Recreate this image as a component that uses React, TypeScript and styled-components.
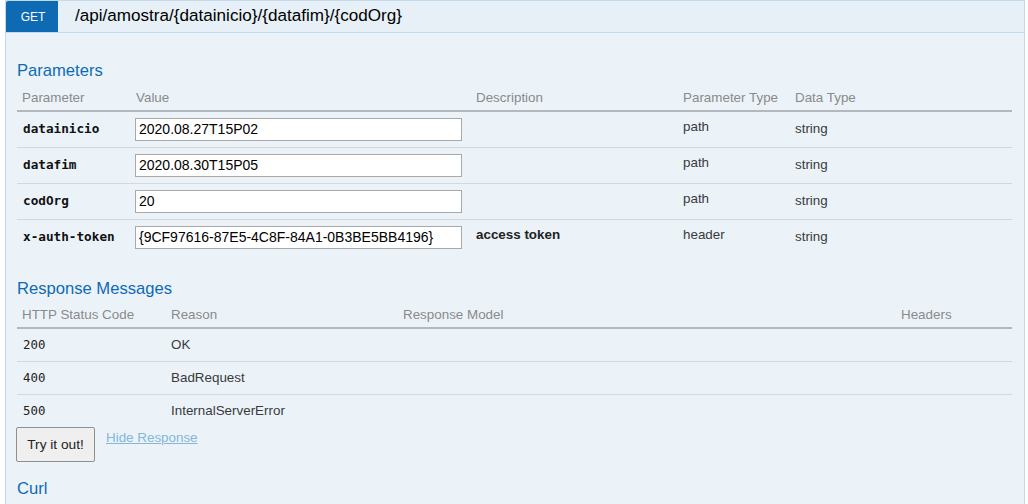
import React from "react";
import styled, { createGlobalStyle } from "styled-components";

const GlobalStyle = createGlobalStyle`
  html, body {
    margin: 0;
    padding: 0;
    background: #ffffff;
    font-family: "Liberation Sans", Arial, sans-serif;
  }
  * {
    box-sizing: border-box;
  }
`;

type Param = {
  name: string;
  value: string;
  description?: string;
  paramType: string;
  dataType: string;
};

const params: Param[] = [
  { name: "datainicio", value: "2020.08.27T15P02", paramType: "path", dataType: "string" },
  { name: "datafim", value: "2020.08.30T15P05", paramType: "path", dataType: "string" },
  { name: "codOrg", value: "20", paramType: "path", dataType: "string" },
  {
    name: "x-auth-token",
    value: "{9CF97616-87E5-4C8F-84A1-0B3BE5BB4196}",
    description: "access token",
    paramType: "header",
    dataType: "string",
  },
];

const responses = [
  { code: "200", reason: "OK" },
  { code: "400", reason: "BadRequest" },
  { code: "500", reason: "InternalServerError" },
];

export default function App() {
  return (
    <>
      <GlobalStyle />
      <Operation>
        <Heading>
          <Method>GET</Method>
          <Path>/api/amostra/{"{datainicio}"}/{"{datafim}"}/{"{codOrg}"}</Path>
        </Heading>
        <Content>
          <SectionTitle $top={28}>Parameters</SectionTitle>
          <Table>
            <colgroup>
              <col style={{ width: 114 }} />
              <col style={{ width: 340 }} />
              <col style={{ width: 207 }} />
              <col style={{ width: 112 }} />
              <col />
            </colgroup>
            <thead>
              <HeadRow $height={30}>
                <Th>Parameter</Th>
                <Th>Value</Th>
                <Th>Description</Th>
                <Th>Parameter Type</Th>
                <Th>Data Type</Th>
              </HeadRow>
            </thead>
            <tbody>
              {params.map((p) => (
                <Row key={p.name} $height={36}>
                  <Cell>
                    <Code $bold>{p.name}</Code>
                  </Cell>
                  <Cell>
                    <ValueInput type="text" defaultValue={p.value} />
                  </Cell>
                  <Cell $raised>
                    <Strong>{p.description}</Strong>
                  </Cell>
                  <Cell $raised>{p.paramType}</Cell>
                  <Cell>{p.dataType}</Cell>
                </Row>
              ))}
            </tbody>
          </Table>

          <SectionTitle $top={24}>Response Messages</SectionTitle>
          <Table>
            <colgroup>
              <col style={{ width: 149 }} />
              <col style={{ width: 232 }} />
              <col style={{ width: 498 }} />
              <col />
            </colgroup>
            <thead>
              <HeadRow $height={29}>
                <Th>HTTP Status Code</Th>
                <Th>Reason</Th>
                <Th>Response Model</Th>
                <Th>Headers</Th>
              </HeadRow>
            </thead>
            <tbody>
              {responses.map((r) => (
                <Row key={r.code} $height={33}>
                  <Cell>
                    <Code>{r.code}</Code>
                  </Cell>
                  <Cell>{r.reason}</Cell>
                  <Cell />
                  <Cell />
                </Row>
              ))}
            </tbody>
          </Table>

          <Actions>
            <TryButton type="button">Try it out!</TryButton>
            <HideLink href="#">Hide Response</HideLink>
          </Actions>

          <SectionTitle $top={17}>Curl</SectionTitle>
        </Content>
      </Operation>
    </>
  );
}

const Operation = styled.div`
  margin: 0 3px 0 5px;
  border: 1px solid #c3d9ec;
  border-bottom: none;
  background: #ebf3f9;
  min-height: 504px;
`;

const Heading = styled.div`
  display: flex;
  align-items: center;
  height: 32px;
  background: #e7f0f7;
  border-bottom: 1px solid #c3d9ec;
`;

const Method = styled.span`
  display: flex;
  align-items: center;
  justify-content: center;
  width: 52px;
  height: 31px;
  background: #0f6ab4;
  color: #ffffff;
  font-size: 12px;
  border-top-left-radius: 2px;
  padding-left: 2px;
`;

const Path = styled.span`
  margin-left: 17px;
  font-size: 17.1px;
  color: #000000;
  padding-bottom: 2px;
`;

const Content = styled.div`
  padding: 0 12px 0 11px;
`;

const SectionTitle = styled.h4<{ $top: number }>`
  margin: ${(p) => p.$top}px 0 0;
  height: 20px;
  line-height: 20px;
  font-size: 16.6px;
  font-weight: normal;
  color: #0f6ab4;
`;

const Table = styled.table`
  width: 100%;
  border-collapse: collapse;
  table-layout: fixed;
  font-size: 13.4px;
  color: #3a3a3a;
`;

const HeadRow = styled.tr<{ $height: number }>`
  height: ${(p) => p.$height}px;
  border-bottom: 2px solid #b4b8bc;
`;

const Th = styled.th`
  text-align: left;
  font-weight: normal;
  color: #8a8a8a;
  vertical-align: bottom;
  padding: 0 5px 4px;
  line-height: 16px;
  white-space: nowrap;
`;

const Row = styled.tr<{ $height: number }>`
  height: ${(p) => p.$height}px;
  border-bottom: 1px solid #d4d8dc;

  &:last-child {
    border-bottom: none;
  }
`;

const Cell = styled.td<{ $raised?: boolean }>`
  padding: 0 5px ${(p) => (p.$raised ? "4px" : "0")};
  vertical-align: middle;
  line-height: 16px;
  white-space: nowrap;
`;

const Code = styled.span<{ $bold?: boolean }>`
  font-family: "DejaVu Sans Mono", "Liberation Mono", monospace;
  font-size: ${(p) => (p.$bold ? "12.7px" : "12.4px")};
  font-weight: ${(p) => (p.$bold ? "bold" : "normal")};
  color: ${(p) => (p.$bold ? "#111111" : "#222222")};
  padding-left: 1px;
`;

const Strong = styled.span`
  font-weight: bold;
  color: #222222;
`;

const ValueInput = styled.input`
  display: block;
  width: 327px;
  height: 23px;
  margin-left: -1px;
  padding: 0 3px;
  border: 1px solid #a9a9a9;
  background: #ffffff;
  font-family: "Liberation Sans", Arial, sans-serif;
  font-size: 14px;
  color: #000000;
  outline: none;
`;

const Actions = styled.div`
  display: flex;
  align-items: flex-start;
`;

const TryButton = styled.button`
  width: 79px;
  height: 35px;
  margin-left: -1px;
  padding: 0;
  border: 1px solid #8f8f8f;
  border-radius: 2px;
  background: #efefef;
  font-family: "Liberation Sans", Arial, sans-serif;
  font-size: 13.7px;
  color: #222222;
`;

const HideLink = styled.a`
  margin: 3px 0 0 11px;
  font-size: 13.4px;
  line-height: 16px;
  color: #84b7dd;
  text-decoration: underline;
`;
